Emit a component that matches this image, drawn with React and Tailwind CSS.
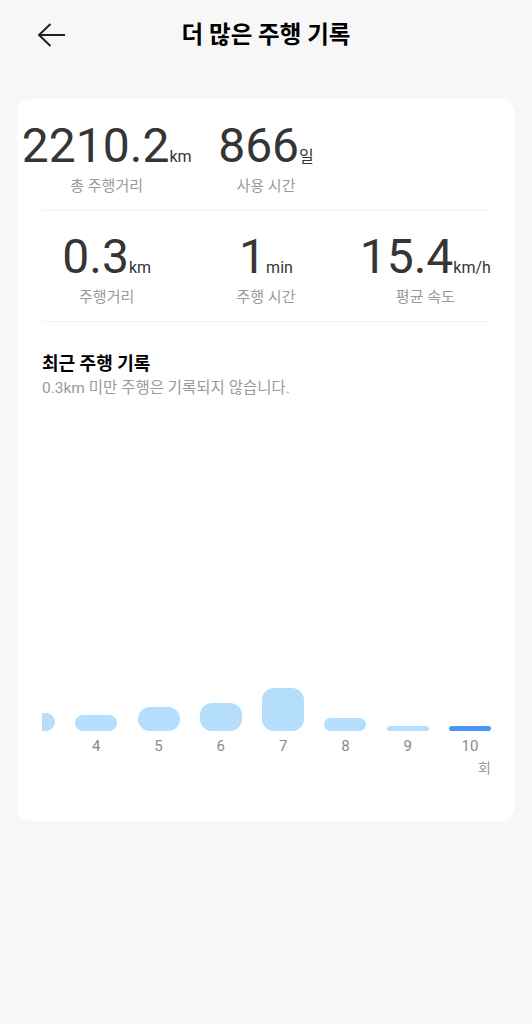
import React from 'react';

const bars = [
    { n: 3, h: 18, hidden: true },
    { n: 4, h: 16 },
    { n: 5, h: 24 },
    { n: 6, h: 28 },
    { n: 7, h: 43 },
    { n: 8, h: 13 },
    { n: 9, h: 5 },
    { n: 10, h: 5, active: true },
];

const Stat = ({ value, unit, label }) => (
    <div className="flex flex-col items-center">
        <div className="flex items-baseline whitespace-nowrap">
            <span className="text-[48px] leading-[48px] text-[#353535]">{value}</span>
            <span className="text-[16px] text-[#353535]">{unit}</span>
        </div>
        <div className="mt-[6px] text-[15px] leading-[21px] text-[#9a9a9a]">{label}</div>
    </div>
);

const App = () => {
    return (
        <div
            className="min-h-screen bg-[#f7f7f7] pb-10"
            style={{ fontFamily: 'Roboto, "Noto Sans CJK KR", sans-serif' }}
        >
            {/* header */}
            <div className="grid h-[72px] grid-cols-[1fr_auto_1fr] items-center">
                <button className="mb-[2px] pl-[37px] text-left">
                    <svg width="30" height="24" viewBox="0 0 30 24" fill="none" stroke="#222" strokeWidth="2">
                        <path d="M2 12 H28" />
                        <path d="M13.5 1 L2 12 L13.5 23" />
                    </svg>
                </button>
                <h1 className="text-[23.5px] font-bold text-black">더 많은 주행 기록</h1>
                <div />
            </div>

            {/* card */}
            <div className="mx-[17px] mt-[27px] rounded-[14px] bg-white pb-[44px]">
                <div className="grid grid-cols-3 px-[10px] pt-[23px]">
                    <Stat value="2210.2" unit="km" label="총 주행거리" />
                    <Stat value="866" unit="일" label="사용 시간" />
                </div>
                <div className="mx-[25px] mt-[13px] h-px bg-[#f1f1f1]" />

                <div className="grid grid-cols-3 px-[10px] pt-[22px]">
                    <Stat value="0.3" unit="km" label="주행거리" />
                    <Stat value="1" unit="min" label="주행 시간" />
                    <Stat value="15.4" unit="km/h" label="평균 속도" />
                </div>
                <div className="mx-[25px] mt-[13px] h-px bg-[#f1f1f1]" />

                <div className="pl-[25px] pr-[24px]">
                    <h2 className="mt-[30px] text-[18px] font-bold leading-[24px] text-black">최근 주행 기록</h2>
                    <p className="mt-[2px] text-[15.5px] leading-[20px] text-[#9a9a9a]">0.3km 미만 주행은 기록되지 않습니다.</p>

                    <div className="flex h-[333px] items-end justify-end gap-[20.3px] overflow-hidden">
                        {bars.map(b => (
                            <div
                                key={b.n}
                                className={`w-[42px] shrink-0 rounded-[12px] ${b.active ? 'bg-[#4b97f3]' : 'bg-[#b5defd]'}`}
                                style={{ height: b.h }}
                            />
                        ))}
                    </div>
                    <div className="mt-[5px] flex justify-end gap-[20.3px] overflow-hidden">
                        {bars.map(b => (
                            <div key={b.n} className="h-[20px] w-[42px] shrink-0 text-center text-[15px] leading-[20px] text-[#8a8a8a]">
                                {b.hidden ? '' : b.n}
                            </div>
                        ))}
                    </div>
                    <div className="mt-[3px] text-right text-[14px] leading-[18px] text-[#999]">회</div>
                </div>
            </div>
        </div>
    );
};

export default App;
